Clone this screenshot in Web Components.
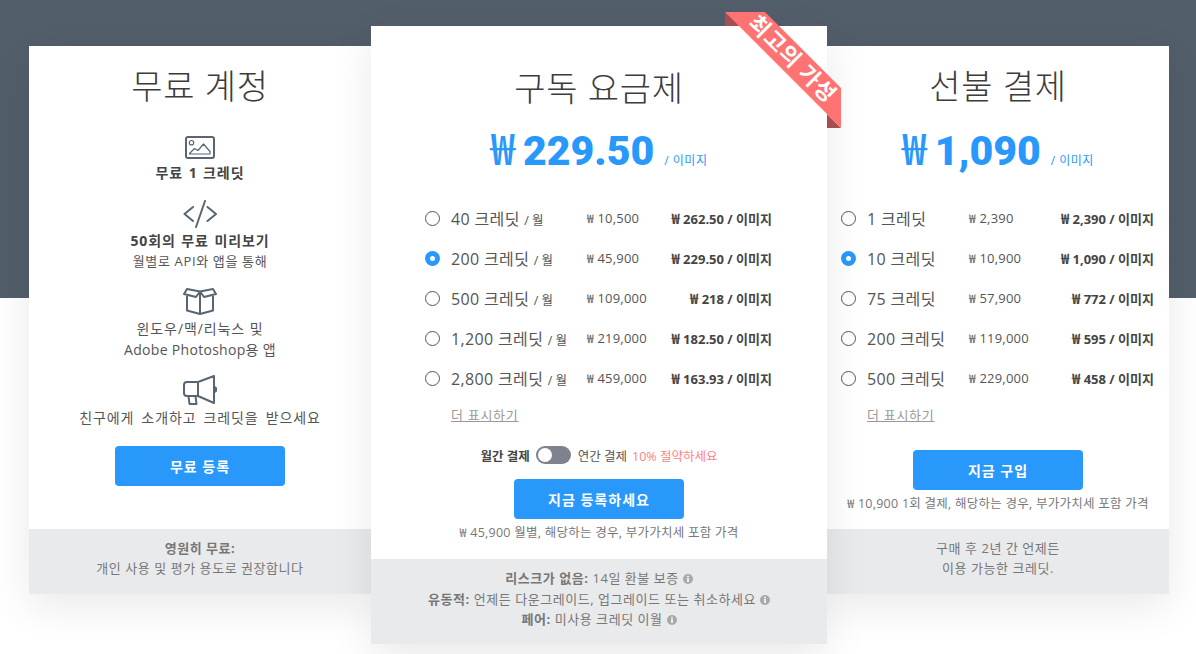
<!DOCTYPE html>
<html lang="ko">
<head>
<meta charset="utf-8">
<title>요금제</title>
<style>
  html, body { margin: 0; padding: 0; }
  body { font-family: "Open Sans", "Noto Sans CJK KR", sans-serif; color: #444; overflow: hidden; height: 654px; }
</style>
</head>
<body>
<pricing-page></pricing-page>

<script>
// Kartu paket
class PlanCard extends HTMLElement {
  connectedCallback() {
    this.attachShadow({ mode: 'open' });
    this.shadowRoot.innerHTML = `
      <style>
        :host {
          display: flex;
          flex-direction: column;
          position: relative;
          box-sizing: border-box;
          width: 342px;
          height: 548px;
          margin-top: 20px;
          padding-top: 20px;
          background: #fff;
          box-shadow: 0 12px 40px rgba(0, 0, 0, 0.09);
        }
        :host([featured]) {
          width: 456px;
          height: 618px;
          margin-top: 0;
          padding-top: 42px;
          z-index: 2;
        }
        h2 {
          margin: 0;
          font-size: 34px;
          line-height: 40px;
          font-weight: 300;
          letter-spacing: 0.7px;
          text-align: center;
          color: #3c3c3c;
        }
        .body { flex: 1; }
        .foot {
          padding: 9px 10px 0;
          height: 65px;
          box-sizing: border-box;
          background: #e9eaec;
          color: #777;
          font-size: 13px;
          letter-spacing: 0.55px;
          line-height: 20px;
          text-align: center;
        }
        :host([featured]) .foot { height: 85px; padding-top: 9px; line-height: 20.5px; }
      </style>
      <h2>${this.getAttribute('heading')}</h2>
      <div class="body"><slot></slot></div>
      <div class="foot"><slot name="foot"></slot></div>
    `;
  }
}

class PriceTag extends HTMLElement {
  connectedCallback() {
    this.attachShadow({ mode: 'open' });
    this.shadowRoot.innerHTML = `
      <style>
        :host {
          display: flex;
          justify-content: center;
          align-items: baseline;
          height: 50px;
          line-height: 50px;
          color: #2899fb;
        }
        .won { font: 500 43px "Noto Sans CJK KR", sans-serif; margin-right: 8px; }
        .num { font: 900 41px Roboto, sans-serif; }
        .per { font-size: 12px; margin-left: 10px; letter-spacing: 0.5px; }
      </style>
      <span class="won">₩</span><span class="num">${this.getAttribute('amount')}</span><span class="per">/ 이미지</span>
    `;
  }
}

class PlanRow extends HTMLElement {
  connectedCallback() {
    const label = this.getAttribute('label');
    const month = this.hasAttribute('monthly') ? '<small>/ 월</small>' : '';
    this.attachShadow({ mode: 'open' });
    this.shadowRoot.innerHTML = `
      <style>
        :host {
          display: flex;
          align-items: center;
          height: 40px;
          color: #555;
        }
        .radio {
          flex: none;
          box-sizing: border-box;
          width: 15px;
          height: 15px;
          margin-right: 11px;
          border: 1px solid #555;
          border-radius: 50%;
        }
        :host([selected]) .radio { border: 5px solid #2899fb; background: #fff; }
        .label { flex: none; width: var(--label-width, 136px); font-size: 16px; letter-spacing: 0.35px; white-space: nowrap; }
        small { font-size: 12.5px; letter-spacing: 0; }
        .total { font-size: 13px; letter-spacing: 0.2px; color: #555; }
        .won { font-size: 12px; }
        .unit { margin-left: auto; font-size: 13px; font-weight: 700; color: #444; white-space: nowrap; }
        .unit .won { font-size: 14px; }
      </style>
      <span class="radio"></span>
      <span class="label">${label} ${month}</span>
      <span class="total"><span class="won">₩</span> ${this.getAttribute('total')}</span>
      <span class="unit"><span class="won">₩</span> ${this.getAttribute('unit')} / 이미지</span>
    `;
  }
}

class PlanButton extends HTMLElement {
  connectedCallback() {
    this.attachShadow({ mode: 'open' });
    this.shadowRoot.innerHTML = `
      <style>
        :host { display: flex; justify-content: center; }
        button {
          width: 170px;
          height: 40px;
          padding: 0;
          border: 0;
          border-radius: 4px;
          background: #2899fb;
          color: #fff;
          font: 700 14px "Open Sans", "Noto Sans CJK KR", sans-serif;
          letter-spacing: 1px;
        }
      </style>
      <button type="button"><slot></slot></button>
    `;
  }
}

class BillingToggle extends HTMLElement {
  connectedCallback() {
    this.attachShadow({ mode: 'open' });
    this.shadowRoot.innerHTML = `
      <style>
        :host {
          display: flex;
          justify-content: center;
          align-items: center;
          height: 18px;
          font-size: 12.5px;
          color: #555;
        }
        b { color: #444; }
        .track {
          display: flex;
          align-items: center;
          box-sizing: border-box;
          width: 35px;
          height: 18px;
          margin: 0 7px 0 6px;
          padding-left: 2px;
          border-radius: 9px;
          background: #7d828c;
        }
        .knob { width: 14px; height: 14px; border-radius: 50%; background: #fff; }
        .save { margin-left: 5px; color: #ff7f7f; }
      </style>
      <b>월간 결제</b><span class="track"><span class="knob"></span></span><span>연간 결제</span><span class="save">10% 절약하세요</span>
    `;
  }
}

class InfoDot extends HTMLElement {
  connectedCallback() {
    this.attachShadow({ mode: 'open' });
    this.shadowRoot.innerHTML = `
      <style>
        :host { display: inline-block; width: 10px; height: 10px; margin-left: 0; vertical-align: -1px; }
        svg { display: block; }
      </style>
      <svg width="10" height="10" viewBox="0 0 10 10">
        <circle cx="5" cy="5" r="5" fill="#a9a9a9"/>
        <rect x="4.2" y="1.8" width="1.6" height="1.5" fill="#fff"/>
        <rect x="4.2" y="4" width="1.6" height="4" fill="#fff"/>
      </svg>
    `;
  }
}

class BestRibbon extends HTMLElement {
  connectedCallback() {
    this.attachShadow({ mode: 'open' });
    this.shadowRoot.innerHTML = `
      <style>
        :host {
          position: absolute;
          top: -14px;
          left: 354px;
          width: 116px;
          height: 116px;
          z-index: 3;
        }
        svg { position: absolute; inset: 0; display: block; }
        .text {
          position: absolute;
          left: -4.5px;
          top: 28px;
          width: 125px;
          line-height: 28px;
          font-size: 22px;
          font-weight: 700;
          letter-spacing: 1px;
          text-align: center;
          color: #fff;
          transform: rotate(45deg);
        }
      </style>
      <svg width="116" height="116" viewBox="0 0 116 116">
        <path d="M0 0 L15 14 H0 Z M102 102 L116 116 H102 Z" fill="#a54f4f"/>
        <path d="M0 0 H40 L116 76 V116 Z" fill="#ff7373"/>
      </svg>
      <div class="text">최고의 가성비</div>
    `;
  }
}

// Halaman utama
class PricingPage extends HTMLElement {
  connectedCallback() {
    this.attachShadow({ mode: 'open' });
    this.shadowRoot.innerHTML = `
      <style>
        :host {
          display: flex;
          align-items: flex-start;
          box-sizing: border-box;
          height: 654px;
          padding: 26px 0 0 29px;
          background: linear-gradient(#535e6b 298px, #fff 298px);
        }
        .features { display: flex; flex-direction: column; align-items: center; gap: 17px; padding-top: 30px; font-size: 14px; line-height: 20px; letter-spacing: 0.9px; text-align: center; color: #555; }
        .feature { display: flex; flex-direction: column; align-items: center; }
        .feature svg { display: block; margin-bottom: 3px; fill: none; stroke: #596573; stroke-width: 2; stroke-linejoin: round; stroke-linecap: round; }
        .feature b { color: #444; word-spacing: 1px; }
        .sub { font-size: 13px; letter-spacing: 0.65px; }
        .tall { line-height: 21px; margin-top: -1px; }
        .latin { letter-spacing: 0.3px; }
        .wide { word-spacing: 2.5px; }
        .last { margin-top: -2px; }
        .features plan-button { margin-top: 1px; align-self: stretch; }
        price-tag { margin-top: 9px; }
        plan-card[featured] price-tag { margin-top: 7px; }
        .rows { margin-top: 33px; padding: 0 55px 0 54px; }
        .rows.narrow { padding: 0 15px 0 14px; --label-width: 102px; }
        .more { display: block; margin: 7px 0 0 26px; font-size: 13px; letter-spacing: 0.7px; line-height: 20px; color: #999; text-decoration: underline; }
        billing-toggle { margin-top: 21px; }
        .go { margin-top: 15px; }
        .go.solo { margin-top: 25px; }
        .note { margin: 4px 0 0; font-size: 12.5px; letter-spacing: 0.25px; line-height: 20px; text-align: center; color: #777; }
        .foot-line { display: block; }
      </style>

      <plan-card heading="무료 계정">
        <div class="features">
          <div class="feature">
            <svg width="30" height="24" viewBox="0 0 30 24">
              <rect x="1" y="1" width="28" height="21" rx="2"/>
              <circle cx="6.5" cy="6.7" r="2.2" stroke-width="1.2"/>
              <path d="M4.5 17.5 L9.5 12.5 L13 14.5 L18.5 8 L25 15.5 V18 H4.5 Z" stroke-width="1.2"/>
            </svg>
            <b>무료 1 크레딧</b>
          </div>
          <div class="feature">
            <svg width="34" height="28" viewBox="0 0 34 28">
              <path d="M10 7 L1.5 14 L10 21 M22 1 L13 27 M24.5 7 L33 14 L24.5 21"/>
            </svg>
            <span><b>50회의 무료 미리보기</b><br><span class="sub">월별로 API와 앱을 통해</span></span>
          </div>
          <div class="feature tall">
            <svg width="34" height="28" viewBox="0 0 34 28">
              <path d="M4 2 L17 4.5 L13 10 L1 7 Z M30 2 L17 4.5 L21 10 L33 7 Z M4 9 V23.5 L17 27 L30 23.5 V9 M17 4.5 V27"/>
            </svg>
            <span>윈도우/맥/리눅스 및<br><span class="latin">Adobe Photoshop용 앱</span></span>
          </div>
          <div class="feature last">
            <svg width="34" height="30" viewBox="0 0 34 30">
              <path d="M15 7 L31 1 V28 L15 21 Z M15 7 H4 Q1 7 1 10 V18 Q1 21 4 21 H15 Z M5.5 21 L6.5 29 H13.5 L12.5 21"/>
              <path d="M31 11.5 A3 3 0 0 1 31 17.5 Z" fill="#596573" stroke-width="1"/>
            </svg>
            <span class="wide">친구에게 소개하고 크레딧을 받으세요</span>
          </div>
          <plan-button>무료 등록</plan-button>
        </div>
        <div slot="foot"><b>영원히 무료:</b><br>개인 사용 및 평가 용도로 권장합니다</div>
      </plan-card>

      <plan-card heading="구독 요금제" featured>
        <best-ribbon></best-ribbon>
        <price-tag amount="229.50"></price-tag>
        <div class="rows">
          <plan-row label="40 크레딧" monthly total="10,500" unit="262.50"></plan-row>
          <plan-row label="200 크레딧" monthly selected total="45,900" unit="229.50"></plan-row>
          <plan-row label="500 크레딧" monthly total="109,000" unit="218"></plan-row>
          <plan-row label="1,200 크레딧" monthly total="219,000" unit="182.50"></plan-row>
          <plan-row label="2,800 크레딧" monthly total="459,000" unit="163.93"></plan-row>
          <a class="more">더 표시하기</a>
        </div>
        <billing-toggle></billing-toggle>
        <plan-button class="go">지금 등록하세요</plan-button>
        <p class="note">₩ 45,900 월별, 해당하는 경우, 부가가치세 포함 가격</p>
        <div slot="foot">
          <span class="foot-line"><b>리스크가 없음:</b> 14일 환불 보증 <info-dot></info-dot></span>
          <span class="foot-line"><b>유동적:</b> 언제든 다운그레이드, 업그레이드 또는 취소하세요 <info-dot></info-dot></span>
          <span class="foot-line"><b>페어:</b> 미사용 크레딧 이월 <info-dot></info-dot></span>
        </div>
      </plan-card>

      <plan-card heading="선불 결제">
        <price-tag amount="1,090"></price-tag>
        <div class="rows narrow">
          <plan-row label="1 크레딧" total="2,390" unit="2,390"></plan-row>
          <plan-row label="10 크레딧" selected total="10,900" unit="1,090"></plan-row>
          <plan-row label="75 크레딧" total="57,900" unit="772"></plan-row>
          <plan-row label="200 크레딧" total="119,000" unit="595"></plan-row>
          <plan-row label="500 크레딧" total="229,000" unit="458"></plan-row>
          <a class="more">더 표시하기</a>
        </div>
        <plan-button class="go solo">지금 구입</plan-button>
        <p class="note">₩ 10,900 1회 결제, 해당하는 경우, 부가가치세 포함 가격</p>
        <div slot="foot">구매 후 2년 간 언제든<br>이용 가능한 크레딧.</div>
      </plan-card>
    `;
  }
}

customElements.define('plan-card', PlanCard);
customElements.define('price-tag', PriceTag);
customElements.define('plan-row', PlanRow);
customElements.define('plan-button', PlanButton);
customElements.define('billing-toggle', BillingToggle);
customElements.define('info-dot', InfoDot);
customElements.define('best-ribbon', BestRibbon);
customElements.define('pricing-page', PricingPage);
</script>
</body>
</html>
